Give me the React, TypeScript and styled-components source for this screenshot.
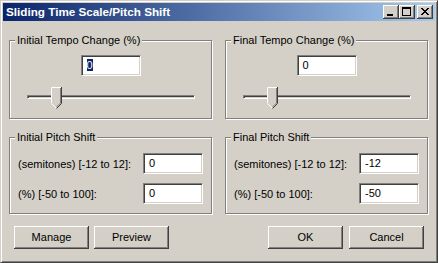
import React from "react";
import styled, { createGlobalStyle } from "styled-components";

const Global = createGlobalStyle`
  html, body { margin: 0; padding: 0; background: #d4d0c8; }
  body { font-family: "Liberation Sans", Arial, sans-serif; font-size: 11px; color: #000; }
`;

const Window = styled.div`
  width: 438px;
  height: 263px;
  box-sizing: border-box;
  border: 1px solid;
  border-color: #d4d0c8 #404040 #404040 #d4d0c8;
  box-shadow: inset 1px 1px 0 #fff, inset -1px -1px 0 #808080;
  padding: 2px;
  background: #d4d0c8;
  display: flex;
  flex-direction: column;
`;

const TitleBar = styled.div`
  height: 18px;
  flex: none;
  display: flex;
  align-items: center;
  padding-left: 3px;
  background: linear-gradient(to right, #0a246a, #a6caf0);
`;

const TitleText = styled.span`
  color: #fff;
  font-weight: bold;
  font-size: 11.7px;
  line-height: 14px;
`;

const CaptionButtons = styled.div`
  margin-left: auto;
  display: flex;
  padding-right: 2px;
`;

const CaptionButton = styled.div<{ $gap?: boolean }>`
  width: 16px;
  height: 14px;
  box-sizing: border-box;
  margin-left: ${(p) => (p.$gap ? "2px" : "0")};
  background: #d4d0c8;
  box-shadow: inset -1px -1px 0 #404040, inset 1px 1px 0 #fff, inset -2px -2px 0 #808080;
  display: flex;
  align-items: flex-start;
  justify-content: flex-start;
  svg { display: block; }
`;

const Body = styled.div`
  flex: 1;
  display: flex;
  flex-direction: column;
  padding: 19px 6px 0 6px;
`;

const GroupRow = styled.div<{ $mt?: number }>`
  display: grid;
  grid-template-columns: 204px 204px;
  column-gap: 12px;
  margin-top: ${(p) => p.$mt ?? 0}px;
`;

const Group = styled.div<{ $h: number }>`
  position: relative;
  width: 203px;
  height: ${(p) => p.$h}px;
  box-sizing: border-box;
  border: 1px solid #808080;
  box-shadow: 1px 1px 0 #fff, inset 1px 1px 0 #fff;
`;

const Legend = styled.span`
  position: absolute;
  top: -7px;
  left: 5px;
  padding: 0 2px;
  background: #d4d0c8;
  line-height: 13px;
  white-space: nowrap;
`;

const TempoContent = styled.div`
  display: flex;
  flex-direction: column;
  align-items: center;
  padding-top: 14px;
`;

const EditBox = styled.div<{ $w?: number }>`
  width: ${(p) => p.$w ?? 60}px;
  height: 21px;
  box-sizing: border-box;
  background: #fff;
  border: 1px solid;
  border-color: #808080 #fff #fff #808080;
  box-shadow: inset 1px 1px 0 #404040, inset -1px -1px 0 #d4d0c8;
  padding-left: 5px;
  line-height: 19px;
  white-space: nowrap;
  flex: none;
`;

const Selected = styled.span`
  background: #0a246a;
  color: #fff;
  display: inline-block;
  line-height: 12px;
  vertical-align: middle;
  margin-top: -2px;
`;

const Slider = styled.div`
  position: relative;
  align-self: stretch;
  margin: 11px 16px 0 17px;
  height: 22px;
`;

const Track = styled.div`
  margin-top: 8px;
  height: 4px;
  box-sizing: border-box;
  border: 1px solid;
  border-color: #808080 #fff #fff #808080;
  box-shadow: inset 1px 1px 0 #404040;
  background: #d4d0c8;
`;

const Thumb = styled.svg<{ $left: number }>`
  position: absolute;
  top: 0;
  left: ${(p) => p.$left}px;
  display: block;
`;

const PitchContent = styled.div`
  display: flex;
  flex-direction: column;
  gap: 9px;
  padding: 15px 8px 0 8px;
`;

const FieldRow = styled.div`
  display: flex;
  align-items: center;
  justify-content: space-between;
  height: 21px;
`;

const FieldLabel = styled.span`
  white-space: nowrap;
`;

const ButtonRow = styled.div`
  display: flex;
  justify-content: space-between;
  margin-top: 12px;
  padding: 0 5px;
`;

const ButtonGroup = styled.div<{ $gap: number }>`
  display: flex;
  gap: ${(p) => p.$gap}px;
`;

const PushButton = styled.div`
  width: 75px;
  height: 23px;
  box-sizing: border-box;
  background: #d4d0c8;
  box-shadow: inset -1px -1px 0 #404040, inset 1px 1px 0 #fff, inset -2px -2px 0 #808080;
  display: flex;
  align-items: center;
  justify-content: center;
  padding-bottom: 1px;
`;

const SliderThumb = ({ left }: { left: number }) => (
  <Thumb $left={left} width="11" height="22" viewBox="0 0 11 22">
    <polygon points="0,0 11,0 11,16 5.5,21.5 0,16" fill="#d4d0c8" />
    <path d="M0.5 16 V0.5 H10" stroke="#fff" fill="none" />
    <path d="M0.5 16.5 L5 21" stroke="#fff" fill="none" />
    <path d="M10.5 0 V16.5 L5.5 21.5" stroke="#404040" fill="none" />
    <path d="M9.5 1 V16 L5.5 20" stroke="#808080" fill="none" />
  </Thumb>
);

const TempoGroup = ({ title, selected }: { title: string; selected?: boolean }) => (
  <Group $h={79}>
    <Legend>{title}</Legend>
    <TempoContent>
      <EditBox>{selected ? <Selected>0</Selected> : "0"}</EditBox>
      <Slider>
        <Track />
        <SliderThumb left={24} />
      </Slider>
    </TempoContent>
  </Group>
);

const PitchGroup = ({ title, semi, pct }: { title: string; semi: string; pct: string }) => (
  <Group $h={77}>
    <Legend>{title}</Legend>
    <PitchContent>
      <FieldRow>
        <FieldLabel>(semitones) [-12 to 12]:</FieldLabel>
        <EditBox>{semi}</EditBox>
      </FieldRow>
      <FieldRow>
        <FieldLabel>(%) [-50 to 100]:</FieldLabel>
        <EditBox>{pct}</EditBox>
      </FieldRow>
    </PitchContent>
  </Group>
);

export default function App() {
  return (
    <>
      <Global />
      <Window>
        <TitleBar>
          <TitleText>Sliding Time Scale/Pitch Shift</TitleText>
          <CaptionButtons>
            <CaptionButton>
              <svg width="16" height="14" viewBox="0 0 16 14">
                <rect x="4" y="9" width="6" height="2" fill="#000" />
              </svg>
            </CaptionButton>
            <CaptionButton>
              <svg width="16" height="14" viewBox="0 0 16 14">
                <rect x="3.5" y="2.5" width="8" height="8" fill="none" stroke="#000" />
                <rect x="3" y="2" width="9" height="2" fill="#000" />
              </svg>
            </CaptionButton>
            <CaptionButton $gap>
              <svg width="16" height="14" viewBox="0 0 16 14">
                <path d="M4 3 L11 10 M5 3 L12 10 M11 3 L4 10 M12 3 L5 10" stroke="#000" strokeWidth="1" shapeRendering="crispEdges" />
              </svg>
            </CaptionButton>
          </CaptionButtons>
        </TitleBar>
        <Body>
          <GroupRow>
            <TempoGroup title="Initial Tempo Change (%)" selected />
            <TempoGroup title="Final Tempo Change (%)" />
          </GroupRow>
          <GroupRow $mt={18}>
            <PitchGroup title="Initial Pitch Shift" semi="0" pct="0" />
            <PitchGroup title="Final Pitch Shift" semi="-12" pct="-50" />
          </GroupRow>
          <ButtonRow>
            <ButtonGroup $gap={5}>
              <PushButton>Manage</PushButton>
              <PushButton>Preview</PushButton>
            </ButtonGroup>
            <ButtonGroup $gap={6}>
              <PushButton>OK</PushButton>
              <PushButton>Cancel</PushButton>
            </ButtonGroup>
          </ButtonRow>
        </Body>
      </Window>
    </>
  );
}
